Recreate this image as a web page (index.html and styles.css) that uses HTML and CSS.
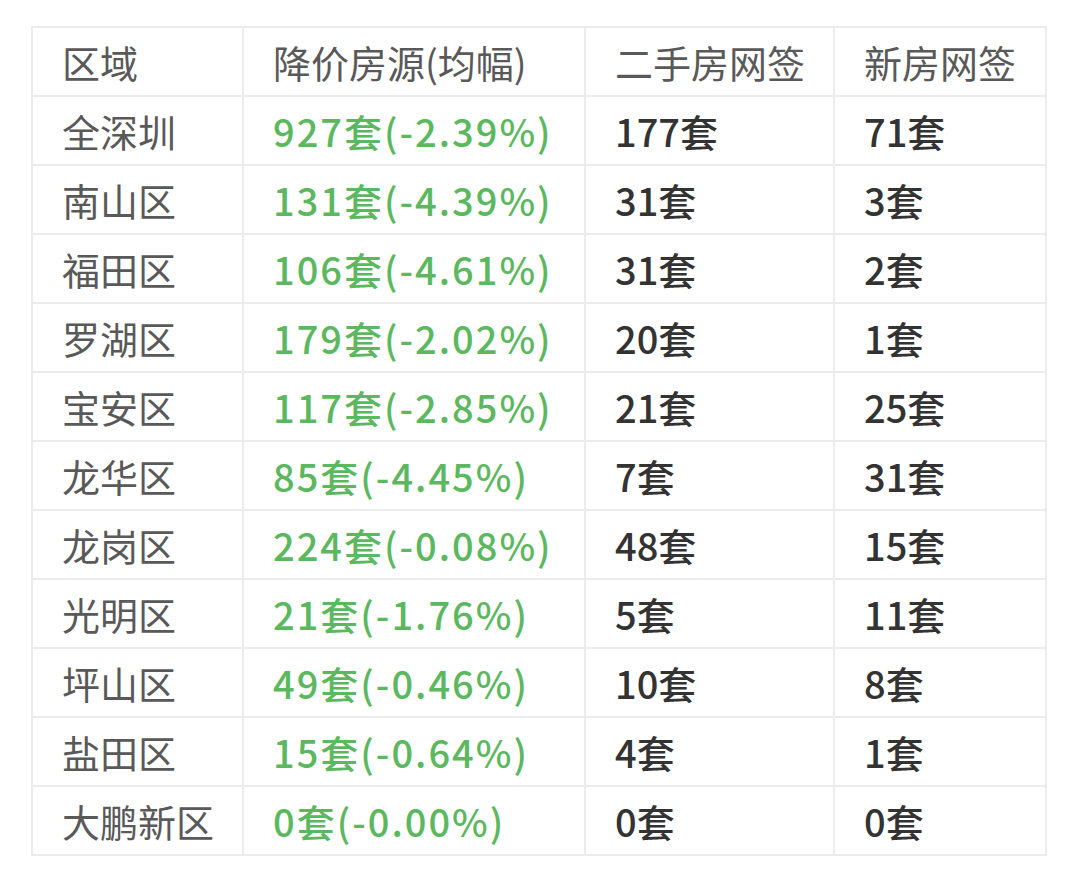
FILE: index.html
```html
<!DOCTYPE html>
<html lang="zh-CN">
<head>
<meta charset="utf-8">
<title>深圳降价房源</title>
<link rel="stylesheet" href="styles.css">
</head>
<body>
<table class="data">
  <colgroup>
    <col class="c1"><col class="c2"><col class="c3"><col class="c4">
  </colgroup>
  <thead>
    <tr><th>区域</th><th>降价房源(均幅)</th><th>二手房网签</th><th>新房网签</th></tr>
  </thead>
  <tbody>
    <tr><td class="area">全深圳</td><td class="drop">927套(-2.39%)</td><td class="num">177套</td><td class="num">71套</td></tr>
    <tr><td class="area">南山区</td><td class="drop">131套(-4.39%)</td><td class="num">31套</td><td class="num">3套</td></tr>
    <tr><td class="area">福田区</td><td class="drop">106套(-4.61%)</td><td class="num">31套</td><td class="num">2套</td></tr>
    <tr><td class="area">罗湖区</td><td class="drop">179套(-2.02%)</td><td class="num">20套</td><td class="num">1套</td></tr>
    <tr><td class="area">宝安区</td><td class="drop">117套(-2.85%)</td><td class="num">21套</td><td class="num">25套</td></tr>
    <tr><td class="area">龙华区</td><td class="drop">85套(-4.45%)</td><td class="num">7套</td><td class="num">31套</td></tr>
    <tr><td class="area">龙岗区</td><td class="drop">224套(-0.08%)</td><td class="num">48套</td><td class="num">15套</td></tr>
    <tr><td class="area">光明区</td><td class="drop">21套(-1.76%)</td><td class="num">5套</td><td class="num">11套</td></tr>
    <tr><td class="area">坪山区</td><td class="drop">49套(-0.46%)</td><td class="num">10套</td><td class="num">8套</td></tr>
    <tr><td class="area">盐田区</td><td class="drop">15套(-0.64%)</td><td class="num">4套</td><td class="num">1套</td></tr>
    <tr><td class="area">大鹏新区</td><td class="drop">0套(-0.00%)</td><td class="num">0套</td><td class="num">0套</td></tr>
  </tbody>
</table>
</body>
</html>
```

FILE: styles.css
```css
html, body {
  margin: 0;
  padding: 0;
  background: #ffffff;
}
body {
  padding: 26px 0 0 31px;
  font-family: "Noto Sans CJK SC", "Noto Sans", sans-serif;
}
.data {
  border-collapse: collapse;
  table-layout: fixed;
  width: 1014px;
}
.c1 { width: 211px; }
.c2 { width: 342px; }
.c3 { width: 249px; }
.c4 { width: 212px; }
.data th,
.data td {
  height: 69px;
  box-sizing: border-box;
  border: 2px solid #ececec;
  padding: 0 0 0 29px;
  text-align: left;
  vertical-align: middle;
  font-size: 38px;
  line-height: 1;
  white-space: nowrap;
}
.data th {
  font-weight: normal;
  color: #595959;
}
.area {
  color: #595959;
}
.drop {
  color: #5cb85f;
  font-size: 40px;
  font-weight: 500;
  letter-spacing: 2px;
}
.num {
  color: #333333;
  font-weight: 500;
}
```
